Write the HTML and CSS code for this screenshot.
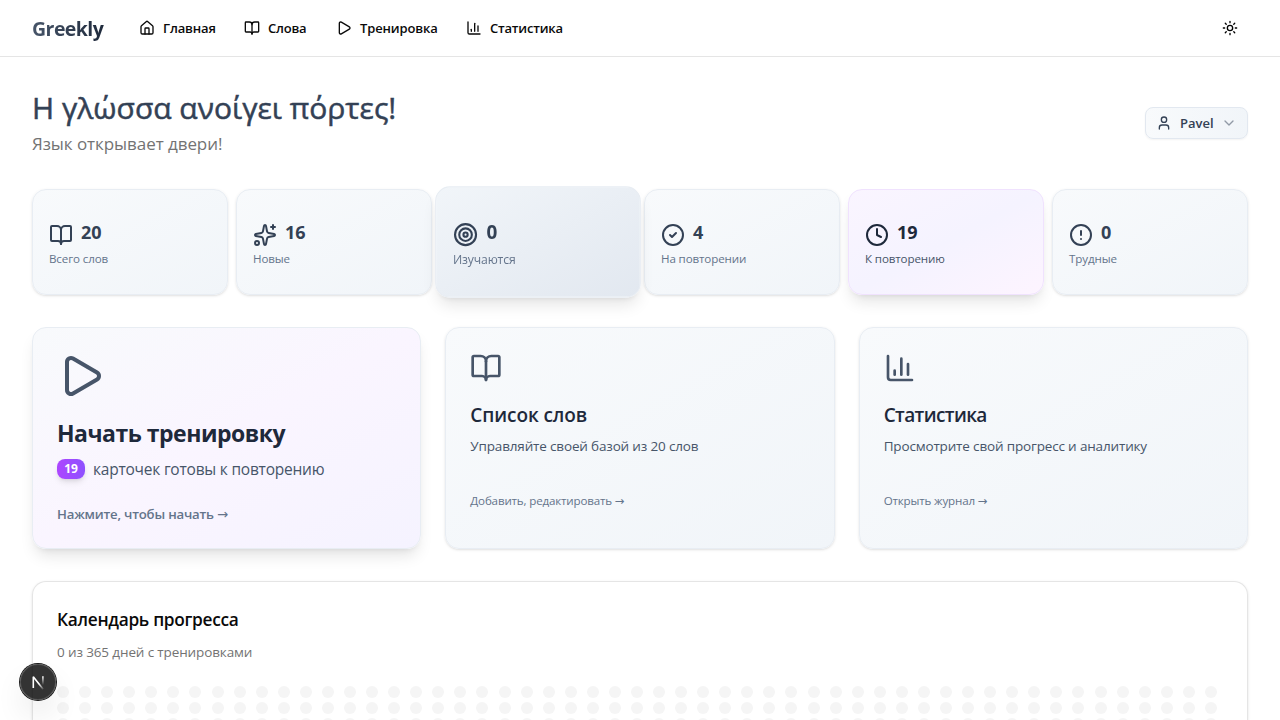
FILE: index.html
```html
<!DOCTYPE html>
<html lang="ru">
<head>
<meta charset="utf-8">
<title>Greekly</title>
<link rel="stylesheet" href="styles.css">
</head>
<body>
<svg class="defs" width="0" height="0">
  <symbol id="house" viewBox="0 0 24 24"><path d="M15 21v-8a1 1 0 0 0-1-1h-4a1 1 0 0 0-1 1v8"/><path d="M3 10a2 2 0 0 1 .709-1.528l7-5.999a2 2 0 0 1 2.582 0l7 5.999A2 2 0 0 1 21 10v9a2 2 0 0 1-2 2H5a2 2 0 0 1-2-2z"/></symbol>
  <symbol id="book" viewBox="0 0 24 24"><path d="M12 7v14"/><path d="M3 18a1 1 0 0 1-1-1V4a1 1 0 0 1 1-1h5a4 4 0 0 1 4 4 4 4 0 0 1 4-4h5a1 1 0 0 1 1 1v13a1 1 0 0 1-1 1h-6a3 3 0 0 0-3 3 3 3 0 0 0-3-3z"/></symbol>
  <symbol id="play" viewBox="0 0 24 24"><path d="M5 5a2 2 0 0 1 3.008-1.728l11.997 6.998a2 2 0 0 1 .003 3.458l-12 7A2 2 0 0 1 5 19z"/></symbol>
  <symbol id="chart" viewBox="0 0 24 24"><path d="M3 3v16a2 2 0 0 0 2 2h16"/><path d="M18 17V9"/><path d="M13 17V5"/><path d="M8 17v-3"/></symbol>
  <symbol id="sun" viewBox="0 0 24 24"><circle cx="12" cy="12" r="4"/><path d="M12 2v2M12 20v2M4.93 4.93l1.41 1.41M17.66 17.66l1.41 1.41M2 12h2M20 12h2M6.34 17.66l-1.41 1.41M19.07 4.93l-1.41 1.41"/></symbol>
  <symbol id="user" viewBox="0 0 24 24"><path d="M19 21v-2a4 4 0 0 0-4-4H9a4 4 0 0 0-4 4v2"/><circle cx="12" cy="7" r="4"/></symbol>
  <symbol id="chevron" viewBox="0 0 24 24"><path d="m6 9 6 6 6-6"/></symbol>
  <symbol id="sparkles" viewBox="0 0 24 24"><path d="M11.017 2.814a1 1 0 0 1 1.966 0l1.051 5.558a2 2 0 0 0 1.594 1.594l5.558 1.051a1 1 0 0 1 0 1.966l-5.558 1.051a2 2 0 0 0-1.594 1.594l-1.051 5.558a1 1 0 0 1-1.966 0l-1.051-5.558a2 2 0 0 0-1.594-1.594l-5.558-1.051a1 1 0 0 1 0-1.966l5.558-1.051a2 2 0 0 0 1.594-1.594z"/><path d="M20 2v4"/><path d="M22 4h-4"/><circle cx="4" cy="20" r="2"/></symbol>
  <symbol id="target" viewBox="0 0 24 24"><circle cx="12" cy="12" r="10"/><circle cx="12" cy="12" r="6"/><circle cx="12" cy="12" r="2"/></symbol>
  <symbol id="check" viewBox="0 0 24 24"><circle cx="12" cy="12" r="10"/><path d="m9 12 2 2 4-4"/></symbol>
  <symbol id="clock" viewBox="0 0 24 24"><circle cx="12" cy="12" r="10"/><path d="M12 6v6l4 2"/></symbol>
  <symbol id="alert" viewBox="0 0 24 24"><circle cx="12" cy="12" r="10"/><path d="M12 8v4M12 16h.01"/></symbol>
</svg>

<header class="topbar">
  <div class="brand">Greekly</div>
  <nav class="nav">
    <a class="nav-link nav-home"><svg class="icon"><use href="#house"/></svg><span>Главная</span></a>
    <a class="nav-link nav-words"><svg class="icon"><use href="#book"/></svg><span>Слова</span></a>
    <a class="nav-link nav-train"><svg class="icon"><use href="#play"/></svg><span>Тренировка</span></a>
    <a class="nav-link nav-stats"><svg class="icon"><use href="#chart"/></svg><span>Статистика</span></a>
  </nav>
  <button class="theme"><svg class="icon"><use href="#sun"/></svg></button>
</header>

<main class="page">
  <section class="intro">
    <div>
      <h1 class="title">Η γλώσσα ανοίγει πόρτες!</h1>
      <p class="subtitle">Язык открывает двери!</p>
    </div>
    <button class="profile"><svg class="icon"><use href="#user"/></svg><span>Pavel</span><svg class="icon chevron"><use href="#chevron"/></svg></button>
  </section>

  <section class="stats">
    <div class="card stat"><div class="stat-top"><svg class="icon"><use href="#book"/></svg><b>20</b></div><span class="label">Всего слов</span></div>
    <div class="card stat"><div class="stat-top"><svg class="icon"><use href="#sparkles"/></svg><b>16</b></div><span class="label">Новые</span></div>
    <div class="card stat raised"><div class="stat-top"><svg class="icon"><use href="#target"/></svg><b>0</b></div><span class="label">Изучаются</span></div>
    <div class="card stat"><div class="stat-top"><svg class="icon"><use href="#check"/></svg><b>4</b></div><span class="label">На повторении</span></div>
    <div class="card stat due"><div class="stat-top"><svg class="icon"><use href="#clock"/></svg><b>19</b></div><span class="label">К повторению</span></div>
    <div class="card stat"><div class="stat-top"><svg class="icon"><use href="#alert"/></svg><b>0</b></div><span class="label">Трудные</span></div>
  </section>

  <section class="actions">
    <div class="card action primary">
      <svg class="icon"><use href="#play"/></svg>
      <h2>Начать тренировку</h2>
      <p class="ready"><span class="badge">19</span><span class="ready-text">карточек готовы к повторению</span></p>
      <p class="hint"><span>Нажмите, чтобы начать</span> <span class="arrow">→</span></p>
    </div>
    <div class="card action">
      <svg class="icon"><use href="#book"/></svg>
      <h3>Список слов</h3>
      <p class="desc">Управляйте своей базой из 20 слов</p>
      <p class="more"><span>Добавить, редактировать</span> <span class="arrow">→</span></p>
    </div>
    <div class="card action">
      <svg class="icon"><use href="#chart"/></svg>
      <h3 class="tight">Статистика</h3>
      <p class="desc">Просмотрите свой прогресс и аналитику</p>
      <p class="more"><span>Открыть журнал</span> <span class="arrow">→</span></p>
    </div>
  </section>

  <section class="calendar">
    <h4>Календарь прогресса</h4>
    <p class="days">0 из 365 дней с тренировками</p>
    <div class="dots" id="dots"></div>
  </section>
</main>

<div class="devtools">
  <svg width="36" height="36" viewBox="0 0 36 36" fill="none">
    <defs>
      <linearGradient id="n1" x1="14" y1="13" x2="23" y2="24" gradientUnits="userSpaceOnUse"><stop offset=".6" stop-color="#fff"/><stop offset="1" stop-color="#fff" stop-opacity=".25"/></linearGradient>
      <linearGradient id="n2" x1="23" y1="12" x2="23" y2="21" gradientUnits="userSpaceOnUse"><stop stop-color="#fff"/><stop offset="1" stop-color="#fff" stop-opacity="0"/></linearGradient>
    </defs>
    <path d="M13.3 24V12.8L23 25" stroke="url(#n1)" stroke-width="1.6" stroke-linejoin="bevel"/>
    <path d="M22.9 12.2V21" stroke="url(#n2)" stroke-width="1.6"/>
  </svg>
</div>
<script src="script.js"></script>
</body>
</html>
```
FILE: styles.css
```css
* { box-sizing: border-box; margin: 0; padding: 0; }
body { height: 720px; overflow: hidden; background: #fff; color: #0a0a0a; font-family: "Open Sans", "Noto Sans", sans-serif; font-size: 14px; line-height: 20px; }
button { font: inherit; border: 0; background: none; }
.defs { position: absolute; }
.icon { display: block; flex: none; width: 16px; height: 16px; fill: none; stroke: currentColor; stroke-width: 2; stroke-linecap: round; stroke-linejoin: round; }
span, b, h1, h2, h3, h4, p { white-space: nowrap; }

.topbar { display: flex; align-items: center; height: 57px; padding: 0 32px; border-bottom: 1px solid #e5e5e5; }
.brand { width: 73px; padding-top: 2px; font-size: 19.5px; line-height: 28px; font-weight: 700; letter-spacing: -0.55px; background: linear-gradient(to right, #475569, #1e293b); -webkit-background-clip: text; background-clip: text; color: transparent; }
.nav { display: flex; margin-left: 22px; }
.nav-link { display: flex; align-items: center; gap: 8px; height: 32px; padding: 0 12px; font-size: 13px; font-weight: 600; letter-spacing: -0.2px; }
.nav-home { width: 105px; }
.nav-words { width: 92px; }
.nav-train { width: 130px; }
.nav-stats { width: 120px; }
.nav-home span, .nav-train span { letter-spacing: -0.12px; }
.theme { display: flex; align-items: center; justify-content: center; width: 36px; height: 36px; margin-left: auto; }

.page { padding: 32px 32px 0; }
.intro { display: flex; align-items: center; justify-content: space-between; height: 68px; margin-bottom: 32px; }
.title { padding-top: 2px; font-size: 30px; line-height: 36px; font-weight: 500; color: #334155; -webkit-text-stroke: 0.5px #334155; }
.subtitle { margin-top: 4px; font-size: 17px; line-height: 28px; letter-spacing: -0.06px; color: #737373; }
.profile { display: flex; align-items: center; width: 103px; height: 32px; padding: 0 10px; border: 1px solid #e2e8f0; border-radius: 8px; background: linear-gradient(to right, #f8fafc, #f1f5f9); color: #334155; font-size: 13px; font-weight: 600; box-shadow: 0 1px 2px rgba(0,0,0,.05); }
.profile span { width: 33px; margin: 0 8px; }
.profile .chevron { opacity: .5; }

.card { border: 1px solid #e8edf3; border-radius: 14px; background: linear-gradient(to bottom right, #f8fafc, #f1f5f9); box-shadow: 0 1px 3px rgba(0,0,0,.1), 0 1px 2px -1px rgba(0,0,0,.1); }
.stats { display: grid; grid-template-columns: repeat(6, 1fr); gap: 8px; margin-bottom: 32px; }
.stat { height: 106px; padding: 29px 16px 0; color: #334155; }
.stat-top { display: flex; gap: 8px; height: 28px; }
.stat .icon { width: 24px; height: 24px; margin-top: 4px; }
.stat b { font-size: 18px; line-height: 26px; font-weight: 700; }
.label { display: block; margin-top: 4px; font-size: 11.6px; line-height: 16px; letter-spacing: -0.13px; color: #64748b; }
.raised { z-index: 1; transform: scale(1.05); background: linear-gradient(to bottom right, #f1f5f9, #e2e8f0); box-shadow: 0 10px 15px -3px rgba(0,0,0,.1), 0 4px 6px -4px rgba(0,0,0,.1); }
.due { border-color: #f0e2fe; background: linear-gradient(to bottom right, #faf5ff, #f5f3ff, #fdf4ff); color: #1e293b; box-shadow: 0 10px 15px -3px rgba(0,0,0,.1), 0 4px 6px -4px rgba(0,0,0,.1); }
.due .label { color: #475569; }

.actions { display: grid; grid-template-columns: repeat(3, 1fr); gap: 24px; margin-bottom: 32px; }
.action { height: 222px; padding: 24px; color: #475569; }
.action .icon { width: 32px; height: 32px; }
.action h3 { margin-top: 17px; font-size: 19px; line-height: 28px; font-weight: 600; letter-spacing: -0.1px; color: #1e293b; }
.action .tight { letter-spacing: -0.62px; }
.desc { margin-top: 7px; font-size: 13.5px; line-height: 20px; letter-spacing: -0.16px; }
.more { margin-top: 37px; font-size: 11.6px; line-height: 16px; letter-spacing: -0.17px; color: #64748b; }
.primary { background: linear-gradient(to bottom right, #f8fafc, #faf5ff, #f5f3ff); box-shadow: 0 10px 15px -3px rgba(0,0,0,.1), 0 4px 6px -4px rgba(0,0,0,.1); }
.primary .icon { width: 48px; height: 48px; }
.primary h2 { margin-top: 17px; font-size: 23px; line-height: 32px; font-weight: 700; letter-spacing: -0.5px; color: #1e293b; }
.ready { display: flex; align-items: center; gap: 8px; height: 24px; margin-top: 8px; font-size: 15.5px; letter-spacing: -0.22px; }
.badge { width: 28px; height: 20px; border-radius: 8px; background: linear-gradient(to right, #ad46ff, #8e51ff); color: #fff; font-size: 12px; line-height: 20px; font-weight: 700; text-align: center; box-shadow: 0 4px 6px -1px rgba(0,0,0,.1), 0 2px 4px -2px rgba(0,0,0,.1); }
.hint { margin-top: 23px; font-size: 13.2px; line-height: 20px; font-weight: 600; letter-spacing: -0.2px; color: #64748b; }
.arrow { font-family: "Noto Sans", "DejaVu Sans", sans-serif; font-weight: 400; }

.calendar { height: 107px; padding: 24px; border: 1px solid #e5e5e5; border-radius: 14px; box-shadow: 0 1px 3px rgba(0,0,0,.1), 0 1px 2px -1px rgba(0,0,0,.1); }
.calendar { height: 139px; border-bottom: 0; border-radius: 14px 14px 0 0; overflow: hidden; }
.calendar h4 { font-size: 17.3px; line-height: 28px; font-weight: 600; letter-spacing: -0.3px; }
.days { margin-top: 8px; font-size: 13.5px; line-height: 20px; letter-spacing: -0.13px; color: #737373; }
.dots { display: grid; grid-template-columns: repeat(53, 1fr); gap: 4px; margin-top: 24px; }
.dot { width: 12px; height: 12px; border-radius: 50%; background: #f5f5f5; }

.devtools { position: fixed; left: 20px; bottom: 20px; width: 36px; height: 36px; border-radius: 50%; background: rgba(0,0,0,.8); box-shadow: 0 0 0 1px #171717, inset 0 0 0 1px rgba(255,255,255,.14), 0 16px 32px -8px rgba(0,0,0,.24); }
```
FILE: script.js
```js
// 53 weeks, the first three weekday rows are in view
const dots = document.getElementById('dots');
for (let i = 0; i < 53 * 3; i++) {
  const dot = document.createElement('div');
  dot.className = 'dot';
  dots.appendChild(dot);
}
```
